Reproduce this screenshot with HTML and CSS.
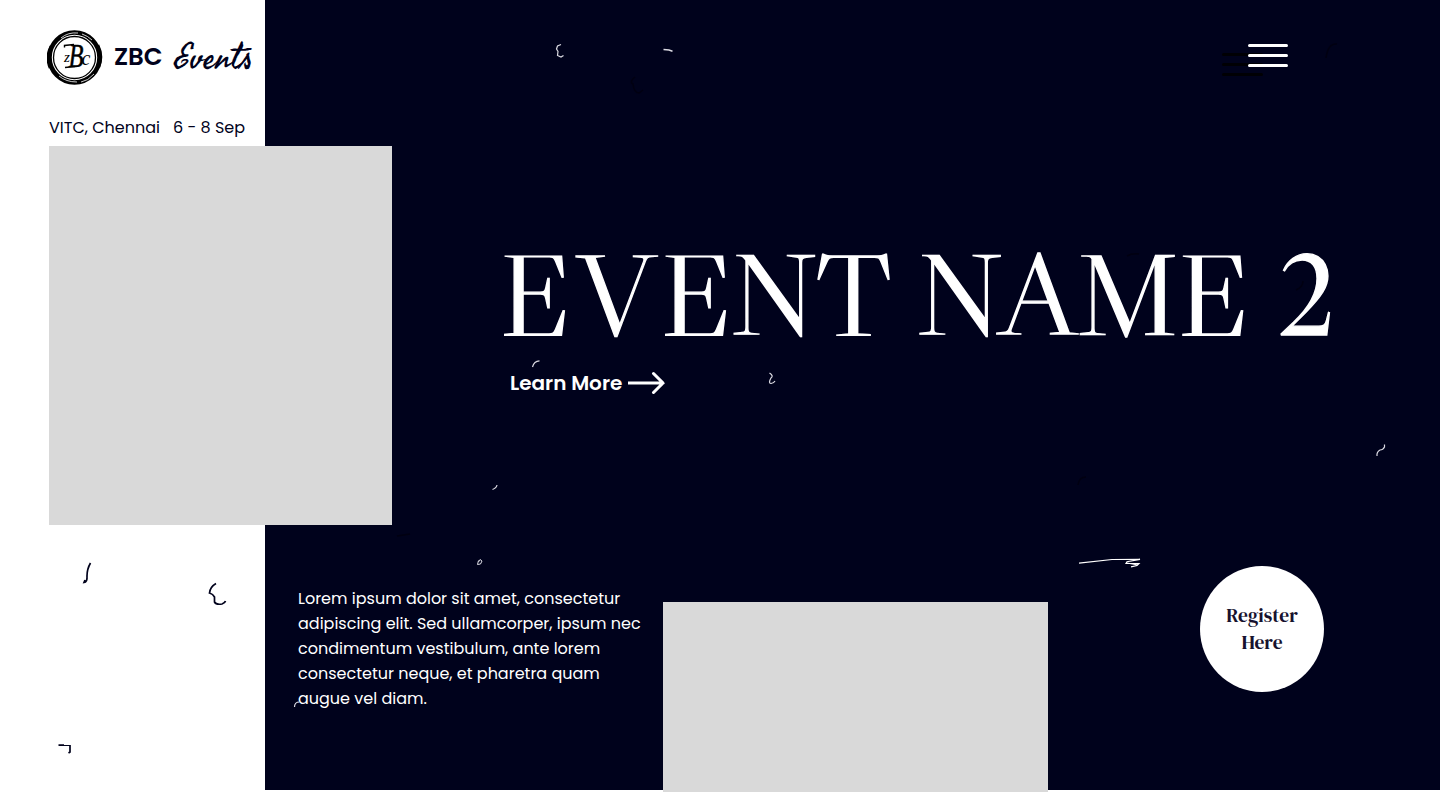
FILE: index.html
```html
<!DOCTYPE html>
<html lang="en">
<head>
<meta charset="utf-8">
<title>ZBC Events</title>
<link rel="stylesheet" href="styles.css">
</head>
<body>
<main class="hero">
  <header class="topbar">
    <a class="brand">
      <svg class="logo" viewBox="0 0 56 56" width="56" height="56">
        <circle cx="27.500" cy="28.500" r="25" fill="none" stroke="#000" stroke-width="4.600"/>
        <path d="M4 17A26 26 0 0 0 3 39M51 16A27 27 0 0 1 52 38" fill="none" stroke="#000" stroke-width="2.600"/>
        <path d="M14 9Q21 3 31 4M35 5Q41 7 45 11M12 47Q19 53 30 53M34 53Q41 52 47 45" fill="none" stroke="#fff" stroke-width="0.800"/>
        <circle cx="27.500" cy="28.500" r="21" fill="none" stroke="#000" stroke-width="1.300"/>
        <path d="M17.500 18.500V16.500L27 15.500M18 38.500L28 37.500" fill="none" stroke="#000" stroke-width="1.400"/>
        <text class="logo-s" x="17" y="32.500">z</text>
        <text class="logo-b" x="21.500" y="37.500" textLength="15" lengthAdjust="spacingAndGlyphs">B</text>
        <text class="logo-s logo-c" x="34.500" y="36">c</text>
      </svg>
      <span class="brand-name">ZBC</span>
      <span class="brand-script">Events</span>
    </a>
    <button class="menu" aria-label="Menu">
      <svg viewBox="0 0 66 34" width="66" height="34">
        <path d="M1.500 11.500H39.500M1.500 21.500H39.500M1.500 31.500H39.500" stroke="#000004" stroke-width="3" stroke-linecap="round"/>
        <path d="M27.500 2.500H64.500M27.500 12.500H64.500M27.500 22.500H64.500" stroke="#fff" stroke-width="3" stroke-linecap="round"/>
      </svg>
    </button>
  </header>
  <section class="feature">
    <div class="poster-column">
      <p class="meta"><span class="place">VITC, Chennai</span><span class="dates">6 - 8 Sep</span></p>
      <div class="poster"></div>
    </div>
    <div class="headline">
      <h1 class="title"><span class="w1"><span class="open">EV</span>ENT</span><span class="w2">NAME</span><span class="w3">2</span></h1>
      <a class="more"><span class="more-text">Learn More</span>
        <svg viewBox="0 0 38 24" width="38" height="24"><path d="M0 12H35M25.500 2.500L35 12L25.500 21.500" fill="none" stroke="#fff" stroke-width="3" stroke-linecap="round"/></svg>
      </a>
    </div>
  </section>
  <section class="details">
    <p class="copy"><span>Lorem ipsum dolor sit amet, consectetur</span><span>adipiscing elit. Sed ullamcorper, ipsum nec</span><span>condimentum vestibulum, ante lorem</span><span>consectetur neque, et pharetra quam</span><span>augue vel diam.</span></p>
    <div class="preview"></div>
    <a class="register"><span>Register</span><span>Here</span></a>
  </section>
  <svg class="confetti" viewBox="0 0 1440 792" width="1440" height="792" aria-hidden="true">
    <g stroke="#01021c" stroke-width="1.700">
      <path d="M90.500 563Q87 569 87 576Q87.500 582 84 582.500L85 580"/>
      <path d="M216 583.500Q210 587 209.500 593Q213 594 214.500 597V602Q216 605 222 604Q225 603 225.500 601"/>
      <path d="M58.500 745.200H64M70 745V752L68.500 753"/>
      <path d="M64 745.500H70" stroke-width="1"/>
    </g>
    <g stroke="#dcdce4" stroke-width="1.200">
      <path d="M561 44.500L557.500 46L556.500 49L558 51.500L557.500 55.500L561 57L563.500 55.500"/>
      <path d="M663.500 49.500L669 50L672.500 51.200" stroke-width="1.500"/>
      <path d="M532.500 367Q534 361 539.500 360.800"/>
      <path d="M769.500 373Q774 376 771 378Q768 383 771 383.500Q774 383 775 381"/>
      <path d="M497 485Q496.500 488 492.500 489.500"/>
      <path d="M478.500 560.500L477.500 564.500L480.500 564L482 561L480 559.500L478.500 562" stroke-width="1"/>
      <path d="M1384.500 444.500V447Q1383 450 1380 450Q1376.500 452 1377 456"/>
      <path d="M1079 563.200L1112 559.500L1140 559.400L1127 561.700L1126 563.500L1139 563.500L1137 565.500L1131 566.800M1127 563L1138 565" stroke="#fff"/>
      <path d="M294.500 707Q294.500 702 299.500 702"/>
    </g>
    <g stroke="#000011" stroke-width="1.500">
      <path d="M635 77Q629 82 633 84Q634 93 639 93L643 90"/>
      <path d="M1326 58Q1328 43 1337 44"/>
      <path d="M1078 485Q1079 477 1086 477"/>
      <path d="M1127 256Q1132 253 1139 254M1296 290Q1303 287 1303 281M397 536L410 534"/>
    </g>
  </svg>
</main>
</body>
</html>
```
FILE: styles.css
```css
* { box-sizing: border-box; }

body {
  margin: 0;
  background: #fff;
  color: #01021c;
  font-family: Poppins, Inter, sans-serif;
}

p, h1 { margin: 0; }

.hero {
  position: relative;
  width: 1440px;
  height: 792px;
  overflow: hidden;
  background: linear-gradient(90deg, #fff 265px, #00021c 265px) 0 0 / 100% 790px no-repeat;
}

.topbar {
  display: flex;
  justify-content: space-between;
  align-items: flex-start;
  height: 115px;
  padding: 29px 152px 0 47px;
}

.brand { display: flex; align-items: center; height: 56px; white-space: nowrap; }
.logo { flex: none; }
.logo-b { font: italic 33px "Liberation Serif", serif; stroke: #000; stroke-width: 0.5px; }
.logo-s { font: italic 15px "Liberation Serif", serif; }
.logo-c { font-size: 20px; }
.brand-name { width: 60px; margin-left: 11px; font-size: 24.5px; font-weight: 600; line-height: 56px; }
.brand-script { padding: 3px 0 0 1px; font: 400 36px/52px "Seaweed Script", cursive; }

.menu { margin-top: 14px; padding: 0; border: 0; background: none; height: 34px; }
.menu svg { display: block; }

.feature { display: flex; height: 411px; padding-left: 49px; }
.poster-column { width: 343px; }
.meta { display: flex; height: 31px; font-size: 16px; line-height: 26px; white-space: nowrap; }
.place { width: 124px; }
.poster { height: 379px; background: #d9d9d9; }

.headline { padding: 111px 0 0 111px; }
.title {
  display: flex;
  height: 142px;
  margin-left: -3px;
  color: #fff;
  font: 400 116px/136px "Libre Caslon Display", "Liberation Serif", serif;
  -webkit-text-stroke: 1.3px #fff;
  white-space: nowrap;
}
.w1 { width: 417px; letter-spacing: -1px; }
.open { letter-spacing: 7px; }
.w2 { width: 360px; }
.more { display: flex; align-items: center; gap: 5px; height: 24px; margin: 3px 0 0 7px; color: #fff; white-space: nowrap; }
.more-text { width: 113px; font-size: 20px; font-weight: 600; line-height: 23px; }

.details { display: flex; align-items: flex-start; height: 266px; padding-left: 298px; }
.copy { display: flex; flex-direction: column; width: 365px; padding-top: 60px; color: #fff; font-size: 16px; line-height: 25px; white-space: nowrap; }
.preview { width: 385px; height: 190px; margin-top: 76px; background: #d9d9d9; }
.register {
  display: flex;
  flex-direction: column;
  align-items: center;
  justify-content: center;
  width: 124px;
  height: 126px;
  margin: 40px 0 0 152px;
  border-radius: 50%;
  background: #fff;
  color: #17122e;
  font: 400 19.5px/27px "DM Serif Display", "Playfair Display", serif;
}

.confetti { position: absolute; inset: 0; pointer-events: none; fill: none; }
```
